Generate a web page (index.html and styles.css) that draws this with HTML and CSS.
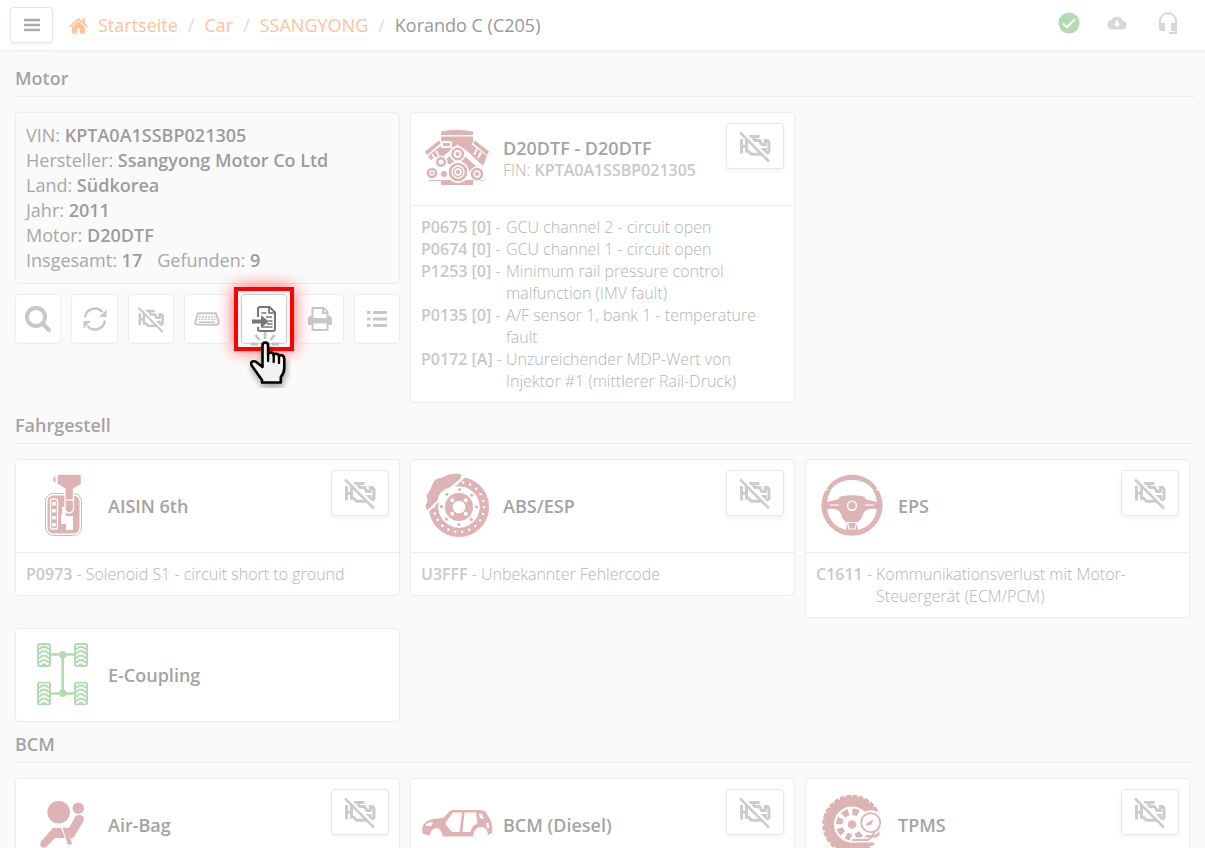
FILE: index.html
```html
<!DOCTYPE html>
<html lang="de">
<head>
    <meta charset="UTF-8">
    <meta name="viewport" content="width=device-width, initial-scale=1.0">
    <title>Korando C (C205)</title>
    <link rel="stylesheet" href="styles.css">
</head>
<body>
    <svg class="defs" aria-hidden="true">
        <mask id="slash-mask">
            <rect width="36" height="36" fill="#fff"/>
            <path d="M4 2.500l31 31" stroke="#000" stroke-width="3"/>
        </mask>
        <symbol id="engine-off" viewBox="0 0 36 36">
            <g fill="none" stroke="currentColor" stroke-width="3" mask="url(#slash-mask)">
                <path d="M4.500 11v14.500M4.500 18.300h5M12 8.500h10.500M17 8v4"/>
                <path d="M9.500 12.500H22.500l2.300 4h3.500v-4h2.200l1.500 2v9l-1.500 1.500h-2.200v-3.500h-2.800V26.300H14.500L11.500 23.300h-2z"/>
            </g>
            <path d="M3 4.500l29 29" stroke="currentColor" stroke-width="2.500"/>
        </symbol>
        <symbol id="wheel" viewBox="0 0 14 24">
            <rect x="1" y="1" width="12" height="22" rx="2" fill="none" stroke="currentColor" stroke-width="2"/>
            <path d="M2 6.500l3-2.500h4l3 2.500M2 11l3-2.700h4L12 11M2 15.500l3-2.700h4l3 2.700M2 20l3-2.700h4L12 20M5 21.500h4" fill="none" stroke="currentColor" stroke-width="2"/>
        </symbol>
    </svg>

    <header class="topbar">
        <button class="btn menu-btn" aria-label="Menü">
            <svg width="16" height="14" viewBox="0 0 16 14"><path d="M1 2h14M1 7h14M1 12h14" stroke="currentColor" stroke-width="2.600" stroke-linecap="round"/></svg>
        </button>
        <nav class="breadcrumb">
            <a href="#"><svg class="home" width="19" height="16" viewBox="0 0 19 16"><path d="M9.500 0L0 8.300l1 1.200 8.500-7.300L18 9.500l1-1.200-3-2.700V.5h-2.500v3zM9.500 3.500L3 9v6.500h5v-5h3v5h5V9z" fill="currentColor"/></svg>Startseite</a>
            <span class="sep">/</span>
            <a href="#">Car</a>
            <span class="sep">/</span>
            <a href="#">SSANGYONG</a>
            <span class="sep">/</span>
            <span>Korando C (C205)</span>
        </nav>
        <div class="status">
            <svg class="ok" width="22" height="22" viewBox="0 0 22 22"><circle cx="11" cy="11" r="10.500" fill="currentColor"/><path d="M5 11.500l4 3.800 8-8.300" fill="none" stroke="#fff" stroke-width="2"/></svg>
            <svg width="24" height="14" viewBox="0 0 24 14"><path d="M16 5A6.300 6.300 0 0 0 4.500 4 4.800 4.800 0 0 0 5 13.500h10.800A4.300 4.300 0 0 0 16 5zM10 11L6.500 7.500h2.300v-3h2.400v3h2.300z" fill="currentColor"/></svg>
            <svg width="20" height="24" viewBox="0 0 20 24"><path d="M2 13v-3a8 8 0 0 1 16 0v12H11" fill="none" stroke="currentColor" stroke-width="2"/><path d="M1 12h6v8H4a3 3 0 0 1-3-3zM13 12h6v8h-6z" fill="currentColor"/></svg>
        </div>
    </header>

    <main>
        <section>
            <h2>Motor</h2>
            <div class="grid">
                <div class="vehicle">
                    <div class="info">
                        <div>VIN: <b>KPTA0A1SSBP021305</b></div>
                        <div>Hersteller: <b>Ssangyong Motor Co Ltd</b></div>
                        <div>Land: <b>Südkorea</b></div>
                        <div>Jahr: <b>2011</b></div>
                        <div>Motor: <b>D20DTF</b></div>
                        <div class="counts"><span>Insgesamt: <b>17</b></span><span>Gefunden: <b>9</b></span></div>
                    </div>
                    <div class="toolbar">
                        <button aria-label="Suchen"><svg width="28" height="28" viewBox="0 0 28 28"><circle cx="12" cy="12" r="9" fill="none" stroke="currentColor" stroke-width="4"/><path d="M19 19l6 6" stroke="currentColor" stroke-width="4" stroke-linecap="round"/></svg></button>
                        <button aria-label="Aktualisieren"><svg width="26" height="26" viewBox="0 0 26 26"><path d="M3 11.500A10 10 0 0 1 20.500 6M23 14.500A10 10 0 0 1 5.500 20" fill="none" stroke="currentColor" stroke-width="2.400"/><path d="M24.500 3.500V11h-7.500zM1.500 22.500V15H9z" fill="currentColor"/></svg></button>
                        <button aria-label="Fehler löschen"><svg width="30" height="30"><use href="#engine-off"/></svg></button>
                        <button aria-label="OBD-Anschluss"><svg width="26" height="14" viewBox="0 0 26 14"><path d="M4 1.200h18l2.800 9q0 2.600-2.600 2.600H3.800q-2.600 0-2.600-2.600z" fill="none" stroke="currentColor" stroke-width="2" stroke-linejoin="round"/><path d="M5 4.800h16M4.500 7.300h17" stroke="currentColor" stroke-width="1.500" stroke-dasharray="2 1"/><path d="M5 10.200h16" stroke="currentColor" stroke-width="1.500"/></svg></button>
                        <button class="current" aria-label="Bericht importieren">
                            <svg width="26" height="28" viewBox="0 0 26 28"><path d="M7 12V4q0-2 2-2h9.500L24 7.500V24q0 2-2 2H9q-2 0-2-2v-2" fill="none" stroke="currentColor" stroke-width="2"/><path d="M18 2v6h6M10.500 8h5M15 12h6M17.500 16h4M16 19h5.500M10.500 22h11" fill="none" stroke="currentColor" stroke-width="1.700"/><path d="M1 14.500h9v-4.300l8 6.300-8 6.300v-4.300H1z" fill="currentColor"/></svg>
                            <svg class="hand" width="44" height="58" viewBox="0 0 44 58">
                                <path d="M18 2v7M8.500 5l4 5M27.500 5l-4 5M4 14h7M25 14h7" stroke="#c4c4c4" stroke-width="2.800"/>
                                <path class="hand-body" d="M15.500 37V15.500q0-3 2.800-3t2.800 3V25q0-2.500 2.800-2.500t2.800 3q.3-2 2.800-1.700 2.500.4 2.500 3 .4-2 2.800-1.500t2.500 4V38q0 5-3.500 9v5.500H15V50L5 36q-2-3.500.5-4.500 2.500-1 5 1.500z" fill="#f2f2f2" stroke="#000" stroke-width="2.600" stroke-linejoin="round"/>
                                <path d="M21.100 24v7M26.700 25v7M32 27v6" stroke="#000" stroke-width="2.300" stroke-linecap="round"/>
                            </svg>
                        </button>
                        <button aria-label="Drucken"><svg width="26" height="26" viewBox="0 0 26 26"><path d="M5.500 12V2h11l4 4v6M16 2v5h5M5.500 16v8h15v-8" fill="none" stroke="currentColor" stroke-width="2"/><path d="M1 13q0-3 3-3h1v2h16v-2h1q3 0 3 3v6h-4v-1.500H5V19H1z" fill="currentColor"/></svg></button>
                        <button aria-label="Liste"><svg width="22" height="20" viewBox="0 0 22 20"><path d="M1 3.500h3.500M1 10h3.500M1 16.500h3.500M7 3.500h14M7 10h14M7 16.500h14" stroke="currentColor" stroke-width="3"/></svg></button>
                    </div>
                </div>

                <article class="card">
                    <div class="card-head">
                        <svg class="unit fault" viewBox="0 0 72 72">
                            <g fill="currentColor">
                                <path d="M20 12V8.500Q36 5 52 8.500V12z"/>
                                <path d="M20 13.500h32v5.500L38 45h-4L20 36z"/>
                                <path d="M20 20l-2-2.500L4 28.500l2 3.500zM22 21L7 33l3 4 4-3 8 1zM52 20l2-2.500 14 11-2 3.500zM50 21l16 12-5 13-10-12-8-9z"/>
                                <path d="M7 57h58l-5 1H52v4H20v-4H9z"/>
                            </g>
                            <path d="M21 19h9v5h-9zM11 31l3 5M15 28l3 5M56 26l-3 6M60 29l-3 6" fill="none" stroke="#fff" stroke-width="1.800"/>
                            <path d="M20 38L36 24l23 19M11 44l12 11 12-15 9 8 12-4" fill="none" stroke="#fff" stroke-width="4"/>
                            <path d="M40 35l14 13" stroke="currentColor" stroke-width="8"/>
                            <path d="M43 27l19 18" stroke="#fff" stroke-width="3"/>
                            <g fill="#fff"><circle cx="36.700" cy="31" r="8"/><circle cx="20" cy="39" r="6.500"/><circle cx="11" cy="50" r="6.500"/><circle cx="23" cy="51" r="5"/><circle cx="37" cy="49" r="11"/><circle cx="56" cy="51" r="7.500"/></g>
                            <g fill="none" stroke="currentColor" stroke-width="2.600"><circle cx="36.700" cy="31" r="5.200"/><circle cx="20" cy="39" r="3.800"/><circle cx="11" cy="50" r="4"/><circle cx="37" cy="49" r="8"/><circle cx="37" cy="49" r="4.500" stroke-width="1.400"/><circle cx="56" cy="51" r="5"/></g>
                            <g fill="currentColor"><circle cx="36.700" cy="31" r="2"/><circle cx="11" cy="50" r="1.500"/><circle cx="23" cy="51" r="3"/><circle cx="37" cy="49" r="2"/><circle cx="56" cy="51" r="2"/></g>
                        </svg>
                        <div class="title"><h3>D20DTF - D20DTF</h3><p>FIN: <b>KPTA0A1SSBP021305</b></p></div>
                        <button class="btn clear-btn" aria-label="Fehler löschen"><svg width="36" height="36"><use href="#engine-off"/></svg></button>
                    </div>
                    <dl class="faults">
                        <dt><b>P0675 [0]</b> -</dt><dd>GCU channel 2 - circuit open</dd>
                        <dt><b>P0674 [0]</b> -</dt><dd>GCU channel 1 - circuit open</dd>
                        <dt><b>P1253 [0]</b> -</dt><dd>Minimum rail pressure control malfunction (IMV fault)</dd>
                        <dt><b>P0135 [0]</b> -</dt><dd>A/F sensor 1, bank 1 - temperature fault</dd>
                        <dt><b>P0172 [A]</b> -</dt><dd>Unzureichender MDP-Wert von Injektor #1 (mittlerer Rail-Druck)</dd>
                    </dl>
                </article>
            </div>
        </section>

        <section>
            <h2>Fahrgestell</h2>
            <div class="grid">
                <article class="card">
                    <div class="card-head">
                        <svg class="unit fault" viewBox="0 0 72 72">
                            <rect x="19.500" y="23.500" width="36" height="42" rx="8" fill="none" stroke="currentColor"/>
                            <rect x="21.500" y="25.500" width="32" height="38" rx="6" fill="currentColor"/>
                            <rect x="24.500" y="29" width="7" height="30" rx="2" fill="none" stroke="#fff" stroke-width="1.400"/>
                            <path d="M26.200 32h3.600v3.500h-3.600zM26.200 39h3.600v3.500h-3.600zM26.200 46h3.600v3.500h-3.600zM26.200 53h3.600v3.500h-3.600z" fill="#fff"/>
                            <path d="M36 37h4v9h7v14h-7v-6h-5v-9h1z" fill="#fff"/>
                            <path d="M32 4h22l1.500 1.500V14L47.500 19v20q-1 4-4.200 4T39 39V19l-8-5V6z" fill="currentColor" stroke="#fff" stroke-width="1.300"/>
                            <path d="M39 30h8.500" stroke="#fff" stroke-width="1.200"/>
                            <path d="M29.500 6v7l-2.200-2V8z" fill="currentColor"/>
                        </svg>
                        <div class="title"><h3>AISIN 6th</h3></div>
                        <button class="btn clear-btn" aria-label="Fehler löschen"><svg width="36" height="36"><use href="#engine-off"/></svg></button>
                    </div>
                    <dl class="faults"><dt><b>P0973</b> -</dt><dd>Solenoid S1 - circuit short to ground</dd></dl>
                </article>

                <article class="card">
                    <div class="card-head">
                        <svg class="unit fault" viewBox="0 0 72 72">
                            <circle cx="38" cy="37" r="25.300" fill="none" stroke="currentColor" stroke-width="9.500"/>
                            <circle cx="38" cy="37" r="25" fill="none" stroke="#fff" stroke-width="2.600" stroke-linecap="round" stroke-dasharray="0 7.140"/>
                            <path d="M0 49L52 0H0z" fill="#fff"/>
                            <circle cx="38" cy="37" r="20.500" fill="#fff"/>
                            <path d="M6 40.500l-1.500-5 2-4-1-6 4-6 3-8 4-3 5-1 6-3 8-1 5 1-1 4-11 9q-11 3-12 13z" fill="currentColor"/>
                            <circle cx="38" cy="37" r="17.500" fill="none" stroke="currentColor" stroke-width="3.200" stroke-linecap="round" stroke-dasharray="0 13.744"/>
                            <circle cx="38" cy="37" r="14" fill="currentColor"/>
                            <g fill="#fff"><circle cx="38" cy="37" r="6.300"/><circle cx="31.300" cy="30.300" r="2"/><circle cx="44.700" cy="30.300" r="2"/><circle cx="31.300" cy="43.700" r="2"/><circle cx="44.700" cy="43.700" r="2"/></g>
                        </svg>
                        <div class="title"><h3>ABS/ESP</h3></div>
                        <button class="btn clear-btn" aria-label="Fehler löschen"><svg width="36" height="36"><use href="#engine-off"/></svg></button>
                    </div>
                    <dl class="faults"><dt><b>U3FFF</b> -</dt><dd>Unbekannter Fehlercode</dd></dl>
                </article>

                <article class="card">
                    <div class="card-head">
                        <svg class="unit fault" viewBox="0 0 72 72">
                            <circle cx="36" cy="35.300" r="30.500" fill="currentColor"/>
                            <path d="M11 32Q14 10 36 10t25 22l-12-3-2-2q-11-3-22 0l-2 2z" fill="#fff"/>
                            <path d="M11 39q12-1 14 5t6 9l-1 7Q14 56 11 39zM61 39q-12-1-14 5t-6 9l1 7q16-4 19-21z" fill="#fff"/>
                            <path d="M4 19.500h8M60 19.500h8" stroke="#fff" stroke-width="1.500"/>
                            <path d="M15 32q4-3 8 0v4l-9-1zM57 32q-4-3-8 0v4l9-1z" fill="currentColor"/>
                            <path d="M32 53.500h8v5h-8z" fill="currentColor"/>
                            <path d="M14 35h9M58 35h-9M31 52.500h10M31.500 53l1.500 6h6l1.500-6" fill="none" stroke="#fff" stroke-width="1.200"/>
                            <path d="M23 27q13-3.500 26 0l-3 20-3 4H29l-3-4z" fill="currentColor"/>
                            <circle cx="36" cy="35.700" r="4.500" fill="none" stroke="#fff" stroke-width="1.600"/>
                        </svg>
                        <div class="title"><h3>EPS</h3></div>
                        <button class="btn clear-btn" aria-label="Fehler löschen"><svg width="36" height="36"><use href="#engine-off"/></svg></button>
                    </div>
                    <dl class="faults"><dt><b>C1611</b> -</dt><dd>Kommunikationsverlust mit Motor-Steuergerät (ECM/PCM)</dd></dl>
                </article>

                <article class="card">
                    <div class="card-head">
                        <svg class="unit good" viewBox="0 0 72 72">
                            <path d="M25 15.500h23M25 54.500h23M36.700 15v39" stroke="currentColor" stroke-width="2.600"/>
                            <circle cx="36.700" cy="15.700" r="3.700" fill="currentColor"/><circle cx="36.700" cy="54.300" r="3.700" fill="currentColor"/>
                            <use href="#wheel" x="11" y="4" width="14" height="24"/><use href="#wheel" x="48" y="4" width="14" height="24"/>
                            <use href="#wheel" x="11" y="42.500" width="14" height="24"/><use href="#wheel" x="48" y="42.500" width="14" height="24"/>
                        </svg>
                        <div class="title"><h3>E-Coupling</h3></div>
                    </div>
                </article>
            </div>
        </section>

        <section>
            <h2>BCM</h2>
            <div class="grid">
                <article class="card">
                    <div class="card-head">
                        <svg class="unit fault" viewBox="0 0 72 72">
                            <circle cx="32.700" cy="23.300" r="11.300" fill="currentColor"/><circle cx="52.300" cy="19.300" r="5.700" fill="currentColor"/>
                            <path d="M49 28q2-3 6-2 4 2 2.500 6L48 48l-3 2-5-11h3zM27 39h8l4 10H29l-9 9q-4 2-5.500-1-1-3 1-5z" fill="currentColor"/>
                            <path d="M36.500 38.500L41 39l5 16-4 1z" fill="currentColor"/>
                        </svg>
                        <div class="title"><h3>Air-Bag</h3></div>
                        <button class="btn clear-btn" aria-label="Fehler löschen"><svg width="36" height="36"><use href="#engine-off"/></svg></button>
                    </div>
                </article>

                <article class="card">
                    <div class="card-head">
                        <svg class="unit fault" viewBox="0 0 72 72">
                            <path d="M2 45q-2-6 1-10 3-4 10-5l9-1 7-7 2-1h29l4 1 5 8q3 7 2 14l-4 2q-1-8-7-8-7 0-8 9.500H22Q20 39 15.500 39 10 39 9 46.500z" fill="currentColor"/>
                            <path d="M24.500 33.500L32 23.500h9L38.500 43H31l-6-7zM43.500 23.500h11.500l1.500 11q-6 2-7 8.500h-8zM58 24.500l3 .500 2 5-4-1zM65 34h2.500l1 5H66zM5 35l5-2 2 1-2 3H5z" fill="#fff"/>
                        </svg>
                        <div class="title"><h3>BCM (Diesel)</h3></div>
                        <button class="btn clear-btn" aria-label="Fehler löschen"><svg width="36" height="36"><use href="#engine-off"/></svg></button>
                    </div>
                </article>

                <article class="card">
                    <div class="card-head">
                        <svg class="unit fault" viewBox="0 0 72 72">
                            <circle cx="36" cy="35.500" r="23" fill="none" stroke="currentColor" stroke-width="10"/>
                            <circle cx="36" cy="35.500" r="28.500" fill="none" stroke="currentColor" stroke-width="2.500" stroke-dasharray="5 1.400"/>
                            <circle cx="36" cy="35.500" r="11.500" fill="none" stroke="currentColor" stroke-width="9" stroke-dasharray="5.500 3.532"/>
                            <circle cx="36" cy="35.500" r="8" fill="none" stroke="#fff" stroke-width="3"/>
                            <circle cx="36" cy="35.500" r="4.300" fill="currentColor"/>
                            <path d="M66 34v17H34" fill="none" stroke="#fff" stroke-width="5"/>
                            <circle cx="54.700" cy="33.700" r="12.500" fill="#fff"/>
                            <circle cx="54.700" cy="33.700" r="9.500" fill="none" stroke="currentColor" stroke-width="1.800"/>
                            <path d="M49.500 37q1-4 4-4l4-3-1.500 4q-1 3-4 2z" fill="currentColor"/>
                            <path d="M63 40q-5 2-7 7-2 4-6 4H36" fill="none" stroke="currentColor" stroke-width="1.800"/>
                        </svg>
                        <div class="title"><h3>TPMS</h3></div>
                        <button class="btn clear-btn" aria-label="Fehler löschen"><svg width="36" height="36"><use href="#engine-off"/></svg></button>
                    </div>
                </article>
            </div>
        </section>
    </main>
</body>
</html>
```
FILE: styles.css
```css
* {
    margin: 0;
    padding: 0;
    box-sizing: border-box;
}

body {
    font-family: 'Open Sans', sans-serif;
    font-size: 18px;
    font-weight: 400;
    line-height: 25px;
    color: #a8a8a8;
    background: #fafafa;
}

b {
    font-weight: 600;
    color: #9c9c9c;
}

svg {
    display: block;
    flex: none;
}

button {
    font: inherit;
    cursor: pointer;
}

.defs {
    position: absolute;
    width: 0;
    height: 0;
}

.topbar {
    display: flex;
    align-items: center;
    height: 50px;
    padding: 0 27px 0 10px;
    background: #fff;
    box-shadow: 0 1px 3px rgba(0, 0, 0, 0.07);
}

.btn {
    display: flex;
    align-items: center;
    justify-content: center;
    background: #fff;
    border: 1px solid #e6e6e6;
    border-radius: 4px;
    box-shadow: 0 2px 5px rgba(0, 0, 0, 0.06);
}

.menu-btn {
    width: 43px;
    height: 36px;
    color: #aaa;
}

.breadcrumb {
    display: flex;
    flex: 1;
    gap: 10px;
    margin-left: 16px;
    padding-top: 2px;
    color: #999;
}

.breadcrumb a {
    display: flex;
    align-items: center;
    color: #ffc299;
    text-decoration: none;
    border-bottom: 1px solid #fff6f0;
}

.home {
    margin-right: 10px;
}

.breadcrumb .sep {
    color: #ddd;
}

.status {
    display: flex;
    align-items: center;
    gap: 27px;
    padding-bottom: 4px;
    color: #d8d8d8;
}

.ok {
    color: #b2dbb2;
}

main {
    padding: 6px 10px 10px 15px;
}

h2 {
    margin-bottom: 15px;
    padding: 9px 0 5px;
    font-size: 18px;
    font-weight: 600;
    line-height: 26px;
    color: #a4a4a4;
    border-bottom: 1px solid #ededed;
}

.grid {
    display: grid;
    grid-template-columns: repeat(3, 1fr);
    gap: 10px;
    align-items: start;
    margin-right: 5px;
}

.info {
    padding: 10px;
    border: 1px solid #ececec;
    border-radius: 4px;
}

.counts {
    display: flex;
    gap: 15px;
}

.toolbar {
    display: grid;
    grid-template-columns: repeat(7, 1fr);
    gap: 10px;
    margin-top: 10px;
}

.toolbar button {
    display: flex;
    align-items: center;
    justify-content: center;
    height: 50px;
    color: #c8c8c8;
    background: #fff;
    border: 1px solid #ededed;
    border-radius: 4px;
}

.toolbar .current {
    position: relative;
    z-index: 1;
    color: #777;
    border-color: #ccc;
    box-shadow: 0 0 0 3px #f6f6f6;
}

/* red frame around the highlighted button */
.current::after {
    content: "";
    position: absolute;
    inset: -8px;
    border: 4px solid #f00;
    box-shadow: 0 0 16px rgba(255, 0, 0, 0.6);
}

.hand {
    position: absolute;
    z-index: 2;
    top: 35px;
    left: 5px;
}

.hand-body {
    filter: drop-shadow(1px 4px 3px rgba(0, 0, 0, 0.35));
}

.card {
    background: #fff;
    border: 1px solid #ececec;
    border-radius: 4px;
}

.card-head {
    display: flex;
    align-items: center;
    gap: 10px;
    padding: 10px;
}

.unit {
    width: 72px;
    height: 72px;
}

.fault {
    color: #deb3b3;
}

.good {
    color: #b2dbb2;
}

.title {
    flex: 1;
    font-size: 16px;
    font-weight: 300;
    line-height: 22px;
    color: #b4b4b4;
}

h3 {
    font-size: 18px;
    font-weight: 600;
    color: #a4a4a4;
}

.title b,
.faults b {
    color: #c8c8c8;
}

.clear-btn {
    align-self: flex-start;
    width: 58px;
    height: 46px;
    color: #ccc;
}

.faults {
    display: grid;
    grid-template-columns: auto 1fr;
    column-gap: 4px;
    padding: 10px;
    font-size: 16px;
    font-weight: 300;
    line-height: 22px;
    color: #b4b4b4;
    border-top: 1px solid #ececec;
}
```
